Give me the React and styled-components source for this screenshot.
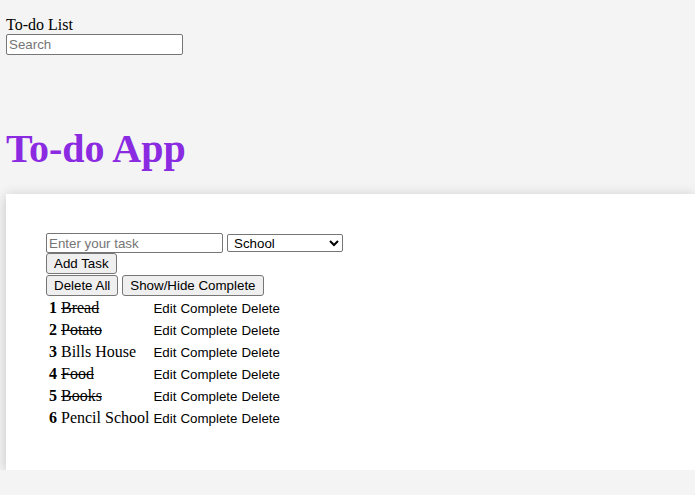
import styled, { createGlobalStyle } from "styled-components";
import React, { useState } from "react";

const GlobalStyle = createGlobalStyle`
  html, body {
    margin: 0;
    padding: 0;
    background-color: #f4f4f4;
  }
  body {
    font-family: "Liberation Serif", "Times New Roman", serif;
    font-size: 16px;
    color: #000;
  }
`

const Page = styled.div`
  padding: 16px 0 0 6px;
`

const TopBar = styled.div`
  display: flex;
  flex-direction: column;
  align-items: flex-start;
`

const TextInput = styled.input`
  box-sizing: border-box;
  width: 177px;
  height: ${({ h }) => h || "21px"};
  margin: 0;
  padding: 1px 2px;
  border: 1px solid #767676;
  border-radius: 2px;
  background: #fff;
  font-family: "Liberation Sans", Arial, sans-serif;
  font-size: 13.333px;
  &::placeholder {
    color: #757575;
  }
`

const Title = styled.h1`
  margin: 72px 0 23px 0;
  font-size: 40px;
  font-weight: 700;
  line-height: 44px;
  color: #8a2be2;
`

const Card = styled.div`
  background-color: #fff;
  box-shadow: 0 2px 12px rgba(0, 0, 0, 0.2);
  padding: 39px 40px 40px 40px;
`

const Row = styled.div`
  display: flex;
  align-items: center;
  gap: 4px;
  height: ${({ h }) => h || "21px"};
`

const Select = styled.select`
  box-sizing: border-box;
  width: 116px;
  height: 18px;
  margin: 0;
  border: 1px solid #767676;
  border-radius: 2px;
  background: #fff;
  font-family: "Liberation Sans", Arial, sans-serif;
  font-size: 13.333px;
  padding: 0 0 0 2px;
`

const Button = styled.button`
  box-sizing: border-box;
  height: 21px;
  margin: 0;
  padding: 1px 7px;
  border: 1px solid #767676;
  border-radius: 3px;
  background-color: #efefef;
  font-family: "Liberation Sans", Arial, sans-serif;
  font-size: 13.333px;
  color: #000;
`

const Table = styled.table`
  border-spacing: 2px;
  margin: 0;
`

const Cell = styled.td`
  padding: 1px;
  white-space: nowrap;
`

const Num = styled.b`
  font-weight: 700;
`

const Name = styled.span`
  text-decoration: ${({ done }) => (done ? "line-through" : "none")};
`

const LinkButton = styled.button`
  margin: 0;
  padding: 0;
  border: none;
  background: none;
  font-family: "Liberation Sans", Arial, sans-serif;
  font-size: 13.333px;
  color: #000;
`

const initialTasks = [
  { id: 1, name: "Bread", done: true },
  { id: 2, name: "Potato", done: true },
  { id: 3, name: "Bills House", done: false },
  { id: 4, name: "Food", done: true },
  { id: 5, name: "Books", done: true },
  { id: 6, name: "Pencil School", done: false },
]

const App = () => {
  const [tasks] = useState(initialTasks);

  return (
    <Page>
      <GlobalStyle/>
      <TopBar>
        To-do List
        <TextInput placeholder="Search"/>
      </TopBar>
      <Title>To-do App</Title>
      <Card>
        <Row h="20px">
          <TextInput h="20px" placeholder="Enter your task"/>
          <Select defaultValue="School">
            <option>School</option>
            <option>Home</option>
            <option>Work</option>
          </Select>
        </Row>
        <Row>
          <Button>Add Task</Button>
        </Row>
        <Row h="22px">
          <Button>Delete All</Button>
          <Button>Show/Hide Complete</Button>
        </Row>
        <Table>
          <tbody>
            {tasks.map(t => <tr key={t.id}>
              <Cell>
                <Num>{t.id}</Num> <Name done={t.done}>{t.name}</Name>
              </Cell>
              <Cell>
                <LinkButton>Edit</LinkButton> <LinkButton>Complete</LinkButton> <LinkButton>Delete</LinkButton>
              </Cell>
            </tr>)}
          </tbody>
        </Table>
      </Card>
    </Page>
  )
};

export default App;
